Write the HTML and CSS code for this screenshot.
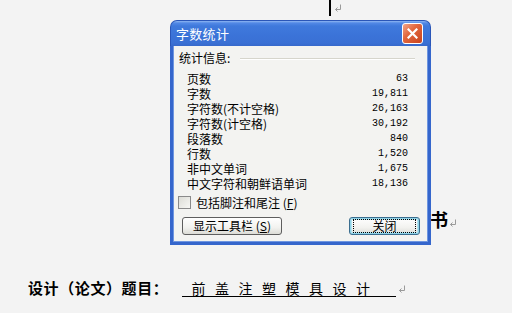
FILE: index.html
```html
<!DOCTYPE html>
<html>
<head>
<meta charset="utf-8">
<link rel="stylesheet" href="styles.css">
</head>
<body>
<div class="doc">
  <div class="cursor-line">
    <span class="caret"></span>
    <svg class="pmark" width="8" height="9" viewBox="0 0 8 9"><path d="M6.5 0.5 V5.5 H1.5 M3.5 3.5 L1.5 5.5 L3.5 7.5" fill="none" stroke="#9a9a9a" stroke-width="1"/></svg>
  </div>
  <div class="heading-line">
    <span class="big">书</span>
    <svg class="pmark" width="8" height="9" viewBox="0 0 8 9"><path d="M6.5 0.5 V5.5 H1.5 M3.5 3.5 L1.5 5.5 L3.5 7.5" fill="none" stroke="#9a9a9a" stroke-width="1"/></svg>
  </div>
  <div class="title-line">
    <span class="title-label">设计（论文）题目：</span>
    <span class="title-value">前盖注塑模具设计</span>
    <svg class="pmark" width="8" height="9" viewBox="0 0 8 9"><path d="M6.5 0.5 V5.5 H1.5 M3.5 3.5 L1.5 5.5 L3.5 7.5" fill="none" stroke="#9a9a9a" stroke-width="1"/></svg>
  </div>
</div>

<div class="dialog">
  <div class="titlebar">
    <span class="title-text">字数统计</span>
    <span class="close-btn">
      <svg width="11" height="11" viewBox="0 0 11 11"><path d="M1.5 1.5 L9.5 9.5 M9.5 1.5 L1.5 9.5" stroke="#fff" stroke-width="2.2" stroke-linecap="square"/></svg>
    </span>
  </div>
  <div class="body">
    <div class="group-head">
      <span>统计信息:</span>
      <span class="groove"></span>
    </div>
    <div class="stats">
      <div class="row"><span>页数</span><span class="num">63</span></div>
      <div class="row"><span>字数</span><span class="num">19,811</span></div>
      <div class="row"><span>字符数(不计空格)</span><span class="num">26,163</span></div>
      <div class="row"><span>字符数(计空格)</span><span class="num">30,192</span></div>
      <div class="row"><span>段落数</span><span class="num">840</span></div>
      <div class="row"><span>行数</span><span class="num">1,520</span></div>
      <div class="row"><span>非中文单词</span><span class="num">1,675</span></div>
      <div class="row"><span>中文字符和朝鲜语单词</span><span class="num">18,136</span></div>
    </div>
    <div class="check-row">
      <span class="checkbox"></span>
      <span>包括脚注和尾注 (<u>F</u>)</span>
    </div>
    <div class="buttons">
      <span class="btn btn-tools">显示工具栏 (<u>S</u>)</span>
      <span class="btn btn-close"><span class="focus">关闭</span></span>
    </div>
  </div>
</div>
</body>
</html>
```

FILE: styles.css
```css
html, body {
  margin: 0;
  padding: 0;
}
body {
  width: 512px;
  height: 313px;
  overflow: hidden;
  background: #f3f3f3;
  font-family: "Noto Sans CJK SC", "Noto Sans", sans-serif;
  color: #000;
  position: relative;
}
.doc {
  display: flex;
  flex-direction: column;
}
.cursor-line {
  height: 16px;
  padding-left: 329px;
  display: flex;
  align-items: flex-start;
}
.caret {
  width: 2px;
  height: 16px;
  background: #000;
}
.cursor-line .pmark {
  margin-left: 3px;
  margin-top: 4px;
}
.heading-line {
  margin-top: 193px;
  padding-left: 430px;
  height: 20px;
  display: flex;
  align-items: center;
}
.big {
  font-size: 18px;
  font-weight: 700;
  line-height: 20px;
}
.heading-line .pmark {
  margin-left: 1px;
  margin-top: 8px;
}
.title-line {
  margin-top: 50px;
  padding-left: 28px;
  height: 18px;
  display: flex;
  align-items: center;
}
.title-label {
  font-size: 15px;
  font-weight: 700;
  line-height: 18px;
  letter-spacing: 0.6px;
}
.title-value {
  margin-left: 14px;
  display: inline-block;
  font-size: 14px;
  line-height: 16px;
  letter-spacing: 9.5px;
  padding-left: 9px;
  padding-right: 17px;
  border-bottom: 1px solid #000;
  margin-right: -9.5px;
}
.title-line .pmark {
  margin-left: 1px;
  margin-top: 2px;
}
.title-value + .pmark {
  margin-left: 11px;
}

/* dialog */
.dialog {
  position: absolute;
  left: 170px;
  top: 20px;
  width: 261px;
  height: 225px;
  display: flex;
  flex-direction: column;
  box-sizing: border-box;
}
.titlebar {
  height: 26px;
  border-radius: 7px 7px 0 0;
  background: linear-gradient(#8fb6f2 0px, #5289e6 2px, #3f79dc 5px, #3b73d8 15px, #3a70d4 22px, #3566c8 26px);
  border: 1px solid #2a56b8;
  border-bottom: none;
  box-sizing: border-box;
  display: flex;
  align-items: center;
  justify-content: space-between;
  padding: 0 7px 0 5px;
}
.title-text {
  color: #fff;
  font-size: 13px;
  line-height: 16px;
  letter-spacing: 0.3px;
  margin-top: 1px;
}
.close-btn {
  width: 21px;
  height: 21px;
  box-sizing: border-box;
  border: 1px solid #fff;
  border-radius: 3px;
  background: linear-gradient(135deg, #f3a58a 0%, #e2683f 40%, #c9431d 100%);
  display: flex;
  align-items: center;
  justify-content: center;
}
.body {
  flex: 1;
  background: #f3f3f1;
  border: 3px solid #3566cc;
  border-top: none;
  box-shadow: inset 1px 0 0 #6f96e0, inset -1px 0 0 #6f96e0, inset 0 -1px 0 #6f96e0;
  padding: 4px 0 0 6px;
  display: flex;
  flex-direction: column;
  font-size: 12px;
}
.group-head {
  display: flex;
  align-items: center;
  height: 15px;
  line-height: 15px;
}
.groove {
  margin-left: 10px;
  width: 175px;
  height: 0;
  border-top: 1px solid #d6d5cc;
  border-bottom: 1px solid #fff;
  margin-top: 2px;
}
.stats {
  margin-top: 6px;
  padding-left: 8px;
  padding-right: 20px;
  display: flex;
  flex-direction: column;
}
.row {
  height: 15px;
  line-height: 15px;
  display: flex;
  justify-content: space-between;
  align-items: center;
}
.num {
  font-family: "Liberation Mono", "DejaVu Sans Mono", monospace;
  font-size: 10px;
}
.check-row {
  margin-top: 4px;
  margin-left: -1px;
  height: 15px;
  line-height: 15px;
  display: flex;
  align-items: center;
}
.checkbox {
  width: 13px;
  height: 13px;
  box-sizing: border-box;
  border: 1px solid #8a8a8a;
  background: linear-gradient(135deg, #dcdcd6, #f7f7f4);
  margin-right: 5px;
}
u {
  text-decoration: underline;
  text-underline-offset: 1px;
}
.buttons {
  margin-top: 7px;
  padding-left: 3px;
  display: flex;
  align-items: center;
}
.btn {
  height: 18px;
  box-sizing: border-box;
  border: 1px solid #5e5e5e;
  border-radius: 3px;
  background: linear-gradient(#ffffff, #f2f2ef 60%, #dcdcd6);
  display: flex;
  align-items: center;
  justify-content: center;
  font-size: 12px;
  line-height: 14px;
}
.btn-tools {
  width: 100px;
}
.btn-close {
  margin-left: 67px;
  width: 71px;
  border-color: #3b6e8f;
  box-shadow: inset 0 0 0 1px #8fd3e8, inset 0 0 0 2px #b8e4f0;
  padding: 2px 3px;
}
.focus {
  flex: 1;
  height: 12px;
  border: 1px dotted #000;
  display: flex;
  align-items: center;
  justify-content: center;
  line-height: 12px;
}
```
